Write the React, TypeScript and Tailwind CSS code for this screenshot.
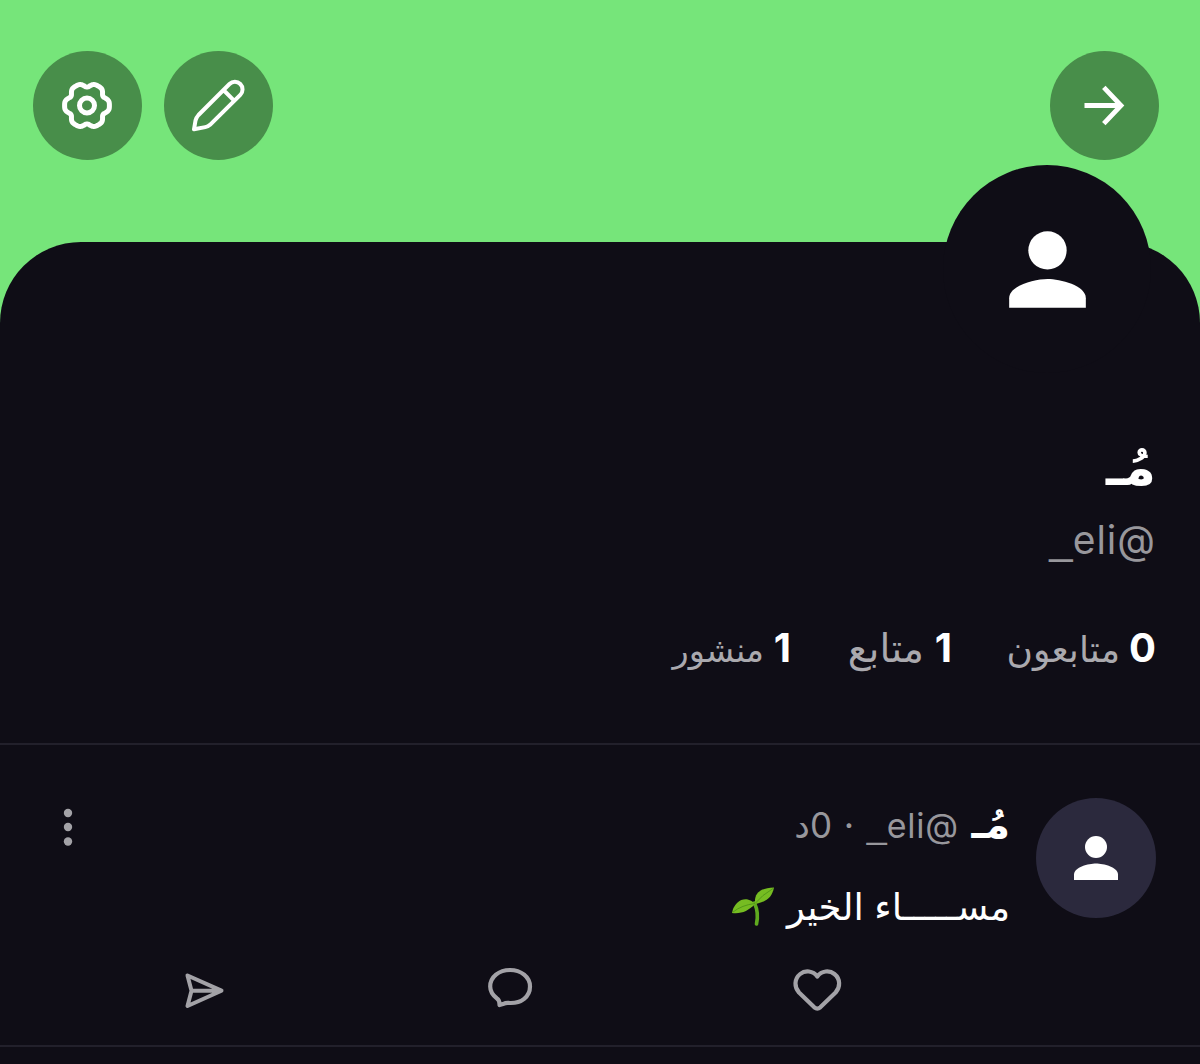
import React from 'react';

const stats = [
  { value: '0', label: 'متابعون', width: 'w-[147px]', labelStyle: 'w-[111px] text-[36px]' },
  { value: '1', label: 'متابع', width: 'w-[104px]', labelStyle: 'w-[76px] text-[39px]' },
  { value: '1', label: 'منشور', width: 'w-[122px]', labelStyle: 'w-[95px] text-[33.5px]' },
];

// six-lobed cog outline around the button centre
const gearPath =
  Array.from({ length: 120 }, (_, i) => {
    const a = (i * Math.PI) / 60;
    const r = 21 + 2 * Math.cos(6 * a) - 0.6 * Math.cos(12 * a);
    return `${i ? 'L' : 'M'}${(54 + r * Math.cos(a)).toFixed(2)} ${(54.5 + r * Math.sin(a)).toFixed(2)}`;
  }).join('') + 'Z';

function PersonIcon({ className }: { className: string }) {
  return (
    <svg viewBox="0 0 24 24" fill="currentColor" className={className}>
      <circle cx="12" cy="8" r="4" />
      <path d="M12 14c-2.67 0-8 1.34-8 4v2h16v-2c0-2.66-5.33-4-8-4z" />
    </svg>
  );
}

function RoundButton({ label, children }: { label: string; children: React.ReactNode }) {
  return (
    <button aria-label={label} className="size-[109px] rounded-full bg-[#488e4a] text-white">
      <svg viewBox="0 0 109 109" fill="none" stroke="currentColor" className="size-full">
        {children}
      </svg>
    </button>
  );
}

function Header() {
  return (
    <header dir="ltr" className="flex h-[242px] items-start justify-between pt-[51px] pr-[41px] pl-[33px]">
      <div className="flex gap-[22px]">
        <RoundButton label="settings">
          <path d={gearPath} strokeWidth="5" strokeLinejoin="round" />
          <circle cx="54" cy="54.5" r="7.5" strokeWidth="5" />
        </RoundButton>
        <RoundButton label="edit">
          <path
            d="M30 78.3 L31.5 69.5 Q32.2 66.5 34.5 64 L65.5 33 A7.6 7.6 0 0 1 76.3 43.8 L46 73.8 Q44 75.6 41.3 76.1 Z M59.5 39 L70.3 49.8"
            strokeWidth="4"
            strokeLinejoin="round"
          />
        </RoundButton>
      </div>
      <RoundButton label="back">
        <path d="M34.5 54.5 H70 M53.8 36.4 L71 54.5 L53.8 72.6" strokeWidth="4.8" />
      </RoundButton>
    </header>
  );
}

function Handle({ className, tailClass }: { className: string; tailClass: string }) {
  return (
    <span className={`whitespace-nowrap text-[#98979c] ${className}`}>
      @eli<span className={`font-['Liberation_Sans',sans-serif] tracking-normal ${tailClass}`}>_</span>
    </span>
  );
}

function Profile() {
  return (
    <section className="relative h-[503px] rounded-t-[81px] border-b-2 border-[#22202b] bg-[#0f0d16] pr-[44px]">
      <div className="absolute -top-[77px] right-[49px] flex size-[208px] items-center justify-center rounded-full bg-[#0f0d16]">
        <PersonIcon className="size-[115px]" />
      </div>
      <h1 className="h-[258px] pt-[185px] text-[52px] leading-[80px] font-bold">مُـ</h1>
      <p className="leading-[80px]">
        <Handle className="text-[39px] tracking-[1px]" tailClass="text-[42px]" />
      </p>
      <div className="flex gap-[57px] pt-[20px] text-[40px] leading-[80px]">
        {stats.map((s) => (
          <div key={s.label} className={`flex items-baseline justify-between whitespace-nowrap ${s.width}`}>
            <span className="font-bold">{s.value}</span>
            <span className={`text-[#aaa9ae] ${s.labelStyle}`}>{s.label}</span>
          </div>
        ))}
      </div>
    </section>
  );
}

function Sprout() {
  return (
    <svg viewBox="0 0 44 42" className="h-[42px] w-[44px]">
      <path d="M25.5 38 Q28 27 23.5 17" fill="none" stroke="#5fa91f" strokeWidth="3.6" strokeLinecap="round" />
      <path d="M24 18 C21 14 13 10 6 17 Q2 21 1 27 C11 28 17 25 24 18 Z" fill="#76bc22" />
      <path d="M24 18 C23 7 29 2 43 1.5 C41 11 36 16 24 18 Z" fill="#76bc22" />
      <path d="M2 26 Q11 19 24 17.5 Q31 9 42 2.5" fill="none" stroke="#539a18" strokeWidth="1" />
    </svg>
  );
}

function Post() {
  return (
    <article className="h-[302px] border-b-2 border-[#22202b] pr-[44px]">
      <div className="flex h-[205px] pt-[53px]">
        <div className="flex size-[120px] shrink-0 items-center justify-center rounded-full bg-[#2b293d]">
          <PersonIcon className="size-[66px]" />
        </div>
        <div className="grow pr-[26px]">
          <div className="flex h-[60px] items-baseline leading-[52px] whitespace-nowrap text-[#98979c]">
            <span className="w-[51px] text-[40px] font-bold text-white">مُـ</span>
            <Handle className="w-[94px] text-[34px] tracking-[0.8px]" tailClass="text-[36px]" />
            <span className="w-[33px] pr-[11px] text-[36px]">·</span>
            <span className="text-[35px]">0د</span>
          </div>
          <div className="flex h-[80px] items-center gap-[12px] pt-[18px]">
            <p className="text-[37px] leading-[70px] whitespace-nowrap">مســـــاء الخير</p>
            <Sprout />
          </div>
        </div>
        <div className="ml-[63px] pt-[10px]">
          <svg viewBox="0 0 10 38" fill="#a3a2a7" className="h-[38px] w-[10px]">
            <circle cx="5" cy="5" r="4.2" />
            <circle cx="5" cy="19" r="4.2" />
            <circle cx="5" cy="33.5" r="4.2" />
          </svg>
        </div>
      </div>
      <div className="flex gap-[257px] pt-4 pr-[313px] text-[#a3a2a7]">
        <svg viewBox="0 0 52 50" fill="none" stroke="currentColor" strokeWidth="4.2" strokeLinejoin="round" className="h-[50px] w-[52px]">
          <path d="M26.3 10.5 C22 4.5 14 4 9.2 8 C3 13 3.2 21 8 26.5 L23.3 41.3 Q26.3 43.8 29.3 41.3 L44.6 26.5 C49.4 21 49.6 13 43.4 8 C38.6 4 30.6 4.5 26.3 10.5 Z" />
        </svg>
        <svg viewBox="0 0 46 50" fill="none" stroke="currentColor" strokeWidth="4.2" strokeLinejoin="round" className="h-[50px] w-[46px]">
          <path d="M9 32.5 C5 29.5 2.2 25.5 2.2 20.5 C2.2 11 11 4 22 4 C33 4 42 11 42 20.5 C42 31 33 37.3 22 37 C18 36.3 17 37 15 38 L11.5 39 Q11.8 34.5 9 32.5 Z" />
        </svg>
        <svg viewBox="0 0 48 50" fill="none" stroke="currentColor" strokeWidth="4" strokeLinejoin="round" className="h-[50px] w-[48px]">
          <path d="M4.5 9.5 L38.5 24.7 L4.5 40 L8.5 24.7 Z M8.5 24.7 H38" />
        </svg>
      </div>
    </article>
  );
}

export default function App() {
  return (
    <main
      dir="rtl"
      className="h-[1064px] w-[1200px] overflow-hidden bg-[#0f0d16] font-['Inter','DejaVu_Sans',sans-serif] text-white"
    >
      <div className="h-[323px] bg-[#76e57a]">
        <Header />
        <Profile />
        <Post />
      </div>
    </main>
  );
}
